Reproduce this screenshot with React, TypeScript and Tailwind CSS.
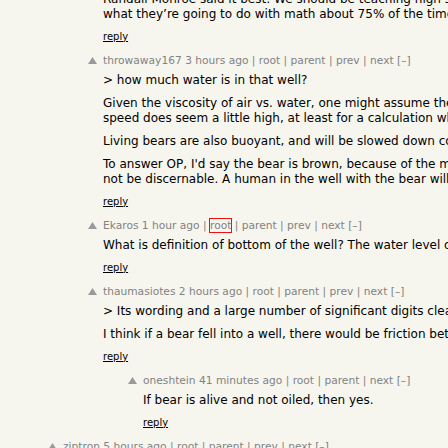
import React from "react";

const Arrow = () => (
  <svg width="10" height="8" viewBox="0 0 10 8" className="block">
    <polygon points="4.5,0 9,7 0,7" fill="#9a9a9a" />
  </svg>
);

type HeadProps = { user: string; age: string; prev?: boolean; hl?: boolean };

function Head({ user, age, prev = true, hl = false }: HeadProps) {
  return (
    <div className="text-[10.67px] leading-[13px] text-[#828282] whitespace-nowrap">
      {user} {age} |{" "}
      {hl ? <span className="ring-1 ring-[#ee1111]">root</span> : "root"} | parent
      {prev ? " | prev" : ""} | next [–]
    </div>
  );
}

const Reply = () => (
  <div className="mt-[8.5px] pb-[11px] text-[10px] leading-[12px] text-black">
    <span className="underline">reply</span>
  </div>
);

type CommentProps = {
  ind: string;
  user?: string;
  age?: string;
  prev?: boolean;
  hl?: boolean;
  noHead?: boolean;
  children?: React.ReactNode;
};

function Comment({ ind, user = "", age = "", prev = true, hl = false, noHead = false, children }: CommentProps) {
  return (
    <div className="flex">
      <div className={ind} />
      <div className="w-[15px] shrink-0 pt-[3px]">{!noHead && <Arrow />}</div>
      <div>
        {!noHead && <Head user={user} age={age} prev={prev} hl={hl} />}
        <div className={noHead ? "text-[12px] leading-[15px] text-black" : "mt-[6.5px] text-[12px] leading-[15px] text-black"}>
          {children}
        </div>
        <Reply />
      </div>
    </div>
  );
}

const P = ({ children }: { children: React.ReactNode }) => (
  <p className="mt-[8px] first:mt-0 whitespace-nowrap">{children}</p>
);

export default function App() {
  return (
    <div className="w-[448px] h-[448px] overflow-hidden bg-[#f6f6ef] font-['DejaVu_Sans',Verdana,sans-serif]">
      <div className="w-[1100px] mt-[-8px]">
        <Comment ind="w-[88px] shrink-0" noHead>
          <P>
            Randall Monroe said it best: We should be teaching high school students to estimate things,
            <br />
            what they’re going to do with math about 75% of the time.
          </P>
        </Comment>
        <Comment ind="w-[88px] shrink-0" user="throwaway167" age="3 hours ago">
          <P>&gt; how much water is in that well?</P>
          <P>
            Given the viscosity of air vs. water, one might assume the bear would slow down in the water. The
            <br />
            speed does seem a little high, at least for a calculation where the bear is in free fall.
          </P>
          <P>Living bears are also buoyant, and will be slowed down considerably by the water.</P>
          <P>
            To answer OP, I'd say the bear is brown, because of the mud. Its true colour would
            <br />
            not be discernable. A human in the well with the bear will be in danger.
          </P>
        </Comment>
        <Comment ind="w-[88px] shrink-0" user="Ekaros" age="1 hour ago" hl>
          <P>What is definition of bottom of the well? The water level or the actual bottom?</P>
        </Comment>
        <Comment ind="w-[88px] shrink-0" user="thaumasiotes" age="2 hours ago">
          <P>&gt; Its wording and a large number of significant digits clearly indicate a homework problem.</P>
          <P>I think if a bear fell into a well, there would be friction between the bear and the walls.</P>
        </Comment>
        <Comment ind="w-[128px] shrink-0" user="oneshtein" age="41 minutes ago" prev={false}>
          <P>If bear is alive and not oiled, then yes.</P>
        </Comment>
        <Comment ind="w-[48px] shrink-0" user="ziptron" age="5 hours ago">
          <P>Some text here.</P>
        </Comment>
      </div>
    </div>
  );
}
